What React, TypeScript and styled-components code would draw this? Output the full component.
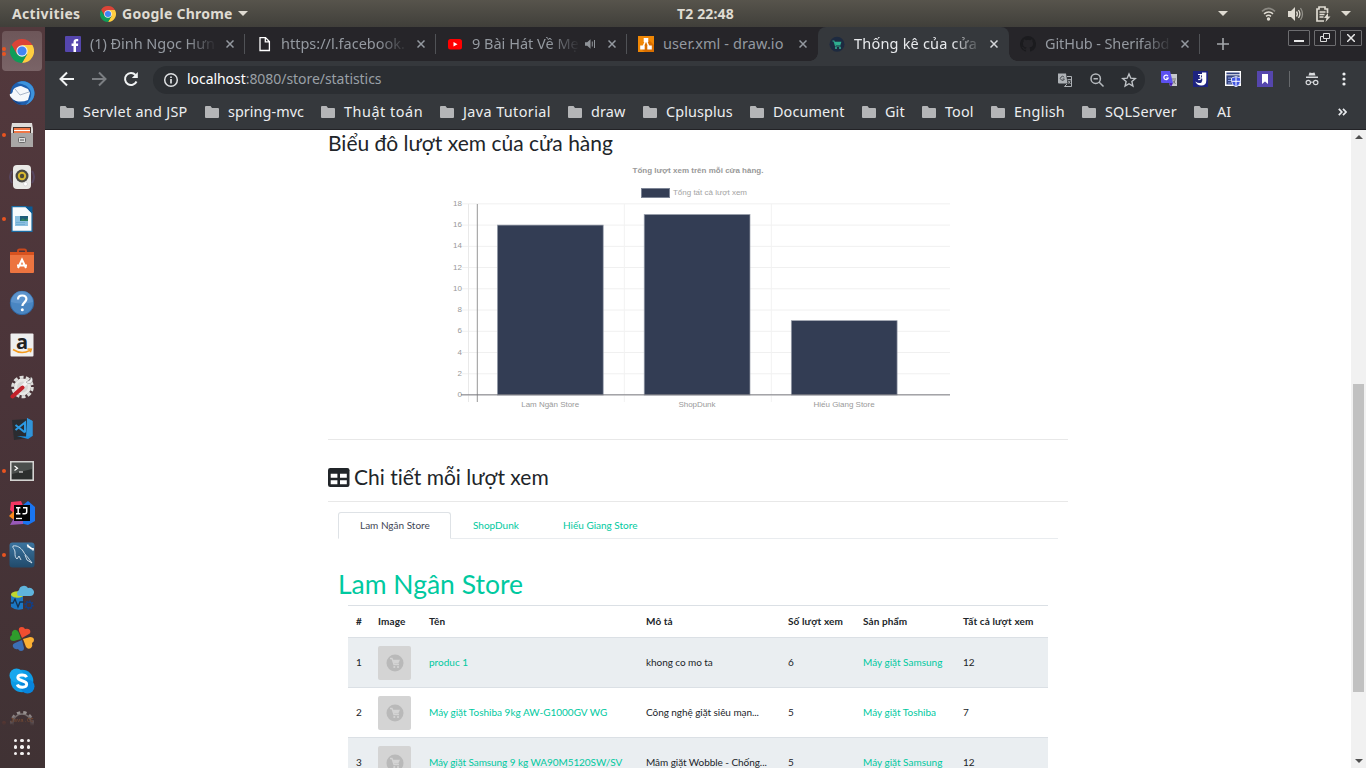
import React from "react";
import styled, { createGlobalStyle } from "styled-components";

const UI = `"Noto Sans", "Open Sans", "DejaVu Sans", sans-serif`;
const PAGE = `Lato, "Open Sans", "Noto Sans", sans-serif`;

const Global = createGlobalStyle`
  * { box-sizing: border-box; }
  body { margin: 0; overflow: hidden; font-family: ${UI}; background: #fff; }
  svg { display: block; flex: none; }
`;

const Desktop = styled.div`
  width: 1366px;
  height: 768px;
  display: flex;
  flex-direction: column;
  overflow: hidden;
`;

/* ---------- Top panel ---------- */

const TopBar = styled.header`
  height: 27px;
  flex: none;
  display: grid;
  grid-template-columns: 677px auto 1fr;
  align-items: center;
  background: linear-gradient(#57544c, #403f3a);
  color: #dfdbd2;
  font: bold 14px/26px ${UI};
`;
const TopLeft = styled.div`
  display: flex;
  align-items: center;
  padding-left: 12px;
`;
const TopText = styled.span<{ $spacing?: number; $w?: number; $ml?: number }>`
  letter-spacing: ${(p) => p.$spacing ?? 0}px;
  width: ${(p) => (p.$w ? `${p.$w}px` : "auto")};
  margin-left: ${(p) => p.$ml ?? 0}px;
  white-space: nowrap;
`;
const TopRight = styled.div`
  display: flex;
  align-items: center;
  justify-content: flex-end;
  padding-right: 15px;
`;
const Caret = styled.i<{ $ml?: number }>`
  width: 0;
  height: 0;
  margin-left: ${(p) => p.$ml ?? 0}px;
  border: 5px solid transparent;
  border-top-color: #dfdbd2;
  border-bottom: 0;
`;
const Tray = styled.div`
  display: flex;
  align-items: center;
  gap: 12px;
  margin-left: 33px;
`;

const Body = styled.div`
  flex: 1;
  display: flex;
  min-height: 0;
`;

/* ---------- Dock ---------- */

const Dock = styled.nav`
  width: 45px;
  flex: none;
  padding-top: 3px;
  background: linear-gradient(#53393d, #4a3439 50%, #403234);
  display: flex;
  flex-direction: column;
`;
const Slot = styled.div<{ $short?: boolean }>`
  height: ${(p) => (p.$short ? 24 : 42)}px;
  width: 45px;
  flex: none;
  overflow: hidden;
  display: grid;
  grid-template-columns: 2px 40px;
  align-items: ${(p) => (p.$short ? "start" : "center")};
  padding-top: ${(p) => (p.$short ? 8 : 0)}px;
  mask-image: ${(p) => (p.$short ? "linear-gradient(rgba(0,0,0,.7) 50%, transparent)" : "none")};
`;
const Tile = styled.div<{ $active?: boolean }>`
  grid-column: 2;
  grid-row: 1;
  width: 40px;
  height: ${(p) => (p.$active ? "40px" : "auto")};
  display: flex;
  align-items: center;
  justify-content: center;
  border-radius: 4px;
  background: ${(p) => (p.$active ? "linear-gradient(#6d5659, #7a6467)" : "none")};
`;
const Dots = styled.div<{ $dim?: boolean }>`
  grid-column: 1;
  grid-row: 1;
  display: flex;
  flex-direction: column;
  gap: 1px;
  z-index: 1;
  margin-top: ${(p) => (p.$dim ? 11 : 0)}px;
  opacity: ${(p) => (p.$dim ? 0.5 : 1)};
`;
const Dot = styled.i`
  width: 4px;
  height: 4px;
  margin-left: 2px;
  border-radius: 50%;
  background: #e95420;
`;
const AppsButton = styled.div`
  display: grid;
  grid-template-columns: repeat(3, 3.4px);
  grid-auto-rows: 3.4px;
  gap: 3.1px;
  margin: 13px 0 0 13.7px;
`;
const AppsDot = styled.i`
  border-radius: 50%;
  background: #f4f2f2;
`;

/* ---------- Browser ---------- */

const Browser = styled.main`
  flex: 1;
  min-width: 0;
  display: flex;
  flex-direction: column;
  background: #35383c;
`;
const TabStrip = styled.div`
  height: 34px;
  flex: none;
  display: flex;
  background: #262529;
  padding-left: 9px;
`;
const TabBox = styled.div<{ $active?: boolean; $line?: boolean }>`
  width: 191px;
  height: 34px;
  flex: none;
  display: flex;
  align-items: center;
  padding: 0 11px 0 11px;
  position: relative;
  border-radius: 8px 8px 0 0;
  background: ${(p) => (p.$active ? "#35383c" : "transparent")};
  color: ${(p) => (p.$active ? "#e8eaed" : "#9499a0")};
  font-size: 14.5px;
  &::after {
    content: "";
    position: absolute;
    right: 0;
    top: 7px;
    width: 1px;
    height: 20px;
    background: ${(p) => (p.$line ? "#505256" : "transparent")};
  }
`;
const TabTitle = styled.span<{ $w: number; $spacing: number; $fade: boolean }>`
  width: ${(p) => p.$w}px;
  margin-left: 9px;
  padding-bottom: 2px;
  overflow: hidden;
  white-space: nowrap;
  line-height: 24px;
  letter-spacing: ${(p) => p.$spacing}px;
  mask-image: ${(p) => (p.$fade ? "linear-gradient(90deg, #000 calc(100% - 30px), transparent)" : "none")};
`;
const TabEnd = styled.div`
  margin-left: auto;
  display: flex;
  align-items: center;
  gap: 12px;
`;
const Corner = styled.i<{ $side: "left" | "right" }>`
  position: absolute;
  bottom: 0;
  ${(p) => p.$side}: -8px;
  width: 8px;
  height: 8px;
  background: radial-gradient(
    circle at ${(p) => (p.$side === "left" ? "0 0" : "100% 0")},
    transparent 7.5px,
    #35383c 8px
  );
`;
const NewTab = styled.div`
  width: 46px;
  display: flex;
  align-items: center;
  justify-content: center;
`;
const WindowButtons = styled.div`
  margin-left: auto;
  display: flex;
  gap: 4px;
  padding: 3px 4px 0 0;
`;
const WinButton = styled.span`
  width: 22px;
  height: 16px;
  border: 1px solid #6d6d70;
  border-radius: 1px;
  display: flex;
  align-items: center;
  justify-content: center;
`;
const Toolbar = styled.div`
  height: 37px;
  flex: none;
  display: flex;
  align-items: center;
  padding: 0 14px 2px 14px;
`;
const NavIcons = styled.div`
  display: flex;
  align-items: center;
  gap: 16px;
  width: 94px;
`;
const Omnibox = styled.div`
  width: 992px;
  height: 28px;
  margin-top: 2px;
  border-radius: 14px;
  background: #2b2e32;
  display: flex;
  align-items: center;
  padding: 0 8px 0 10px;
`;
const Url = styled.span`
  margin-left: 8px;
  flex: 1;
  padding-bottom: 2px;
  color: #9aa0a6;
  font-size: 14px;
  letter-spacing: -0.05px;
  b { font-weight: 400; color: #fff; }
`;
const OmniIcons = styled.div`
  display: flex;
  align-items: center;
  gap: 16px;
`;
const Extensions = styled.div`
  display: flex;
  align-items: center;
  gap: 16px;
  margin-left: 16px;
`;
const ToolDivider = styled.i`
  width: 1px;
  height: 16px;
  margin-left: 16px;
  background: #66696c;
`;
const ToolEnd = styled.div`
  display: flex;
  align-items: center;
  gap: 16px;
  margin-left: 14px;
`;
const Bookmarks = styled.div`
  height: 32px;
  flex: none;
  display: flex;
  align-items: center;
  border-bottom: 1px solid #222226;
  padding: 0 19px 3px 15px;
  color: #eceef0;
  font-size: 14.4px;
  line-height: 20px;
`;
const Bookmark = styled.div<{ $w: number; $spacing: number }>`
  width: ${(p) => p.$w}px;
  flex: none;
  display: flex;
  align-items: center;
  gap: 9px;
  white-space: nowrap;
  letter-spacing: ${(p) => p.$spacing}px;
`;
const BookmarkName = styled.span`
  margin-top: -1px;
`;
const More = styled.span`
  margin-left: auto;
  display: flex;
`;

/* ---------- Page ---------- */

const Viewport = styled.div`
  flex: 1;
  min-height: 0;
  display: flex;
  background: #fff;
`;
const Page = styled.div`
  flex: 1;
  display: flex;
  justify-content: flex-start;
  padding-left: 283px;
  overflow: hidden;
  font-family: ${PAGE};
  font-variant-ligatures: none;
  color: #212529;
`;
const Container = styled.div`
  width: 740px;
  flex: none;
`;
const ChartHeading = styled.h2`
  margin: 0;
  height: 30px;
  font: 400 21px/25px ${PAGE};
  font-variant-ligatures: none;
  white-space: nowrap;
`;
const ChartBox = styled.div`
  height: 279px;
`;
const Rule = styled.hr`
  margin: 0;
  border: 0;
  height: 1px;
  background: #e8e8e8;
`;
const DetailHeading = styled.h2`
  margin: 0;
  height: 61px;
  padding-top: 23px;
  display: flex;
  gap: 4px;
  font: 400 21px/28px ${PAGE};
  font-variant-ligatures: none;
  white-space: nowrap;
  svg { margin-top: 5px; }
`;
const StoreTabs = styled.div`
  margin: 10px 10px 0;
  height: 27px;
  display: flex;
  border-bottom: 1px solid #e9ecef;
  font-size: 10px;
  line-height: 25px;
`;
const StoreTab = styled.span<{ $active?: boolean; $w: number }>`
  height: 27px;
  width: ${(p) => p.$w}px;
  padding-left: 21px;
  white-space: nowrap;
  border: 1px solid transparent;
  border-radius: 3px 3px 0 0;
  color: #00c9a0;
  ${(p) =>
    p.$active &&
    `border-color: #dee2e6; border-bottom-color: #fff; background: #fff; color: #3e4655;`}
`;
const StoreTitle = styled.h1`
  margin: 25px 0 0 10px;
  height: 41px;
  font: 400 26.5px/41px ${PAGE};
  color: #00c9a0;
`;
const Table = styled.div`
  width: 700px;
  margin-left: 20px;
  font-size: 10px;
`;
const Row = styled.div<{ $head?: boolean; $striped?: boolean }>`
  display: grid;
  grid-template-columns: 22px 51px 217px 142px 75px 100px 93px;
  align-items: center;
  height: ${(p) => (p.$head ? 32 : 50)}px;
  border-top: 1px solid #dbe0e5;
  background: ${(p) => (p.$striped ? "#eaeef1" : "#fff")};
  font-weight: ${(p) => (p.$head ? 700 : 400)};
  letter-spacing: ${(p) => (p.$head ? 0.1 : 0)}px;
`;
const Cell = styled.span<{ $link?: boolean; $spacing?: number }>`
  padding: 0 0 2px 8px;
  white-space: nowrap;
  letter-spacing: ${(p) => (p.$spacing === undefined ? "inherit" : `${p.$spacing}px`)};
  color: ${(p) => (p.$link ? "#00c9a0" : "inherit")};
`;
const ThumbCell = styled.span`
  padding-left: 8px;
`;
const Thumb = styled.span`
  width: 33px;
  height: 34px;
  border-radius: 2px;
  background: #d4d4d4;
  display: flex;
  align-items: center;
  justify-content: center;
`;
const Scrollbar = styled.div`
  width: 15px;
  flex: none;
  display: flex;
  flex-direction: column;
  align-items: center;
  background: #f1f1f1;
  padding: 5px 0;
`;
const Arrow = styled.i<{ $down?: boolean }>`
  width: 0;
  height: 0;
  border: 4px solid transparent;
  ${(p) =>
    p.$down
      ? "border-top-color: #505050; border-bottom: 0; margin-top: auto;"
      : "border-bottom-color: #505050; border-top: 0;"}
`;
const ScrollThumb = styled.div`
  width: 11px;
  height: 308px;
  margin-top: 245px;
  background: #c1c1c1;
`;

/* ---------- Icons ---------- */

const Chrome = ({ size }: { size: number }) => (
  <svg width={size} height={size} viewBox="0 0 24 24">
    <path d="M12 6H22.4A12 12 0 0 1 12 24l5.2-9z" fill="#ffcd40" />
    <path d="M1.6 6A12 12 0 0 1 22.4 6H12L6.8 15z" fill="#db4437" />
    <path d="M1.6 6A12 12 0 0 0 12 24l5.2-9H6.8z" fill="#0f9d58" />
    <circle cx="12" cy="12" r="5.7" fill="#f1f1f1" />
    <circle cx="12" cy="12" r="4.6" fill="#4285f4" />
  </svg>
);

const Thunderbird = () => (
  <svg width="26" height="26" viewBox="0 0 26 26">
    <circle cx="13.500" cy="13" r="12" fill="#1f5fae" />
    <path d="M8 3C16-2 25 4 25.500 13c0 6-4 10-9 12 6-6 7-12 4-16-3-4-7-5-12.500-6z" fill="#3d93dc" />
    <path d="M1 12c2 6 5 10 12 12-5 1-11-4-12-12z" fill="#123f82" />
    <path d="M4 10c2-3 6-4 8-4l7 3 2 4-2 7c-5 2-10 2-14 0-3-2-5-5-4-6 2 0 3-2 3-4z" fill="#f6f8fb" />
    <path d="m6 9 5 6 9-3" fill="none" stroke="#a9b6c9" />
  </svg>
);
const Files = () => (
  <svg width="24" height="26" viewBox="0 0 24 26">
    <path d="M2 1h20l1 6v17a1 1 0 0 1-1 1H2a1 1 0 0 1-1-1V7z" fill="#dedcda" />
    <path d="M3 5h18v6H3z" fill="#46342e" />
    <path d="M4 6h16v5H4z" fill="#f07746" />
    <path d="M4 8h16v1H4z" fill="#fff" />
    <path d="M1 11h22v13a1 1 0 0 1-1 1H2a1 1 0 0 1-1-1z" fill="#a9a7a6" />
    <rect x="8.500" y="15.500" width="7" height="5" rx="1" fill="#ddd" stroke="#6b6b6b" />
    <path d="M10 18h4" stroke="#555" />
  </svg>
);
const Rhythmbox = () => (
  <svg width="26" height="26" viewBox="0 0 26 26">
    <path d="M3 7Q-1 13 3 19M23 7q4 6 0 12" fill="none" stroke="#57465f" strokeWidth="2" />
    <rect x="4" y="1" width="18" height="24" rx="4" fill="#e9e9e6" />
    <circle cx="13" cy="12" r="6.500" fill="#4b4a45" />
    <circle cx="13" cy="12" r="4.200" fill="#d8b92f" />
    <circle cx="13" cy="12" r="2.200" fill="#4f4a36" />
    <circle cx="16.500" cy="20" r="2" fill="#fff" stroke="#ccc" strokeWidth=".6" />
  </svg>
);
const Writer = () => (
  <svg width="22" height="26" viewBox="0 0 22 26">
    <path d="M1 .7h14l6 6v18.600H1z" fill="#f8fbfd" stroke="#1b6ca3" strokeWidth="1.200" />
    <path d="M14 .500h7.500V8z" fill="#0b5c96" />
    <rect x="4" y="10" width="13" height="10" fill="#8cc0e0" />
    <rect x="9" y="10" width="8" height="5" fill="#1d5d7a" />
    <path d="M9 15l3-3 2 2 3-2v3z" fill="#2c8060" />
    <path d="M5 16.500h9M5 18.500h9" stroke="#6fadd4" />
  </svg>
);
const Software = () => (
  <svg width="24" height="26" viewBox="0 0 24 26">
    <path d="M8 5V3Q8 1.500 9.500 1.500h5Q16 1.500 16 3v2" fill="none" stroke="#c9481d" strokeWidth="2" />
    <path d="M0 4h24v20a1 1 0 0 1-1 1H1a1 1 0 0 1-1-1z" fill="#ec7440" />
    <path d="M0 4h24v3H0z" fill="#d7521f" />
    <path d="M8 20 12 11.500 16 20M7 17.500h10" fill="none" stroke="#fff" strokeWidth="2" />
  </svg>
);
const Help = () => (
  <svg width="26" height="26" viewBox="0 0 26 26">
    <circle cx="13" cy="13" r="11.700" fill="#4a86c2" stroke="#2f68a5" />
    <path d="M2 12a11 11 0 0 1 22 0q-11 3-22 0z" fill="#6a9fd4" opacity=".6" />
    <path d="M9 9.500q0-4 4.200-4t4.200 3.600c0 3-4 3.600-4 7" fill="none" stroke="#fff" strokeWidth="2.200" />
    <circle cx="13.300" cy="19.800" r="1.500" fill="#fff" />
  </svg>
);
const Amazon = () => (
  <svg width="24" height="24" viewBox="0 0 24 24">
    <rect x=".5" y=".5" width="23" height="23" rx="1" fill="#efefef" />
    <text x="12" y="15.500" textAnchor="middle" fontFamily="Open Sans" fontWeight="700" fontSize="20" fill="#222">a</text>
    <path d="M3 16.500q8.500 5.500 17 .8M17.500 16l3.800.2-1 3" fill="none" stroke="#f39a1d" strokeWidth="1.500" />
  </svg>
);
const Settings = () => (
  <svg width="24" height="24" viewBox="0 0 24 24">
    <circle cx="12.500" cy="12" r="9.800" fill="none" stroke="#dcdcda" strokeWidth="3" strokeDasharray="3.900 2.250" />
    <circle cx="12.500" cy="12" r="7" fill="#d6d6d4" stroke="#e8e8e6" strokeWidth="3" />
    <path d="m12 12 6-6" stroke="#f3f3f3" strokeWidth="3.500" />
    <path d="M16 7a3.600 3.600 0 1 0 5-5l-1 3-2 1z" fill="#eee" stroke="#888" strokeWidth=".5" />
    <path d="m2.500 21.500 10-9" stroke="#c3212a" strokeWidth="4" strokeLinecap="round" />
  </svg>
);
const VsCode = () => (
  <svg width="24" height="24" viewBox="0 0 24 24">
    <path d="m2 3 16-1v19L4 23z" fill="#2a2c30" />
    <path d="m17 1 5.500 3v15L18 22l-11-3 9 .500z" fill="#1f8fdd" />
    <path d="M17 1v18l5.500 0V4z" fill="#3294d8" />
    <path d="M5.500 8 15 15.500M5.500 13 15 5.500v10" fill="none" stroke="#2c9ae3" strokeWidth="2" />
  </svg>
);
const Terminal = () => (
  <svg width="24" height="20" viewBox="0 0 24 20">
    <rect x=".8" y=".8" width="22.400" height="18.400" fill="#2c2f2e" stroke="#d3d3d1" strokeWidth="1.600" />
    <path d="M2 2h20v6L2 13z" fill="#4b4f4d" />
    <path d="m4.500 5 3 2.200-3 2.200M9 11h4" fill="none" stroke="#fff" strokeWidth="1.200" />
  </svg>
);
const IntelliJ = () => (
  <svg width="26" height="26" viewBox="0 0 26 26">
    <path d="M2 2l10-1 4 9-8 6-7-6z" fill="#f43662" />
    <path d="m0 16 5-5 4 8-4 1z" fill="#fb8a1e" />
    <path d="m14 5 5-4 7 6v14l-7 4-8-2z" fill="#1a75f0" />
    <path d="m1 25 4-7h9v6z" fill="#9859b8" />
    <rect x="5" y="5" width="16" height="16" fill="#050505" />
    <path d="M7 7.700h4.400M9.200 7.700v6M7 13.700h4.400M14 7.700h3.700v4q0 2-2 2H13.500" fill="none" stroke="#fff" strokeWidth="1.500" />
    <path d="M7 18.500h6" stroke="#fff" strokeWidth="1.300" />
  </svg>
);
const MySql = () => (
  <svg width="26" height="26" viewBox="0 0 26 26">
    <defs>
      <linearGradient id="mysql" x1="0" y1="0" x2="0" y2="1">
        <stop offset="0" stopColor="#3b749f" />
        <stop offset="1" stopColor="#214a6b" />
      </linearGradient>
    </defs>
    <rect x=".5" y=".5" width="25" height="25" rx="3" fill="url(#mysql)" />
    <path d="M4 4c4-1 8 2 10 5 2 4 4 5 6 8l3 4-5-3M4 4c-1 2 2 3 2 6 0 4 0 5 2 7l2-3 2 4M16 13l2 5" fill="none" stroke="#dbe7ef" strokeWidth=".9" />
    <path d="m19 4 4 3M18.500 2.500l1 3M24 6v2.500" stroke="#fff" strokeWidth="1.600" />
  </svg>
);
const SqlStudio = () => (
  <svg width="24" height="25" viewBox="0 0 24 25">
    <path d="M1 9v13q5 4 12 2V9z" fill="#1c78c4" />
    <ellipse cx="7.500" cy="9.500" rx="6.500" ry="3.300" fill="#bfd630" />
    <path d="M8 11a4 4 0 0 1 1-6 5 5 0 0 1 9-2 4.500 4.500 0 0 1 5 7q-1 1-3 1z" fill="#5fb4dc" />
    <path d="M0 18h3l2-4 3 8 2-5h4" fill="none" stroke="#16324f" strokeWidth="1.300" />
    <circle cx="19" cy="20" r="3.500" fill="none" stroke="#123f86" strokeWidth="2.400" strokeDasharray="1.400 1.300" />
    <circle cx="19" cy="20" r="2.900" fill="none" stroke="#123f86" strokeWidth="1.200" />
  </svg>
);
const Clover = () => (
  <svg width="26" height="26" viewBox="0 0 26 26">
    <path d="M13 12 10 5q-1-4 3-4 2 0 3 2 3-1 5 1 1 3-1 4z" fill="#f04e30" />
    <path d="m14 13 7-2q4 0 4 3 0 2-2 3 1 3-1 5-3 2-5-1z" fill="#fbb034" />
    <path d="m13 14 2 8q0 3-3 3-2 0-3-2-3 1-5-2-1-3 2-4z" fill="#3c6fb6" />
    <path d="m12 13-7 2q-4 0-4-3 0-2 2-3-1-3 2-5 3-1 5 3z" fill="#2f9c2c" />
  </svg>
);
const Skype = () => (
  <svg width="26" height="26" viewBox="0 0 26 26">
    <circle cx="13" cy="13" r="11.300" fill="#0c9be6" />
    <circle cx="7.500" cy="7.500" r="7" fill="#16a7ee" />
    <circle cx="18.500" cy="18.500" r="7" fill="#0885dc" />
    <path d="M17.500 9.200C16.500 6.300 9 6 8.800 9.600c0 4 8.900 2.300 8.900 6.600-.2 4-8.200 4-9.400.3" fill="none" stroke="#fff" strokeWidth="2.900" />
  </svg>
);
const JavaCc = () => (
  <svg width="26" height="26" viewBox="0 0 26 26">
    <circle cx="13" cy="13" r="10.500" fill="none" stroke="#bdb9b7" strokeWidth="3" strokeDasharray="3.300 3" />
    <circle cx="13" cy="13" r="9" fill="none" stroke="#9b9694" strokeWidth="1.500" />
    <text x="13" y="12" textAnchor="middle" fontFamily="Liberation Mono" fontWeight="700" fontSize="5.500" fill="#c9702d">Java.CC</text>
  </svg>
);

const Close = ({ color }: { color: string }) => (
  <svg width="8" height="8" viewBox="0 0 8 8" stroke={color} strokeWidth="1.500">
    <path d="m.5.5 7 7M7.500.5l-7 7" />
  </svg>
);
const Folder = () => (
  <svg width="14" height="12" viewBox="0 0 14 12">
    <path d="M1 0h4.500L7 2h6a1 1 0 0 1 1 1v8a1 1 0 0 1-1 1H1a1 1 0 0 1-1-1V1a1 1 0 0 1 1-1z" fill="#b4b5b7" />
  </svg>
);
const FacebookIcon = () => (
  <svg width="16" height="16" viewBox="0 0 16 16">
    <rect width="16" height="16" rx="1" fill="#5546ad" />
    <path d="M8.500 16v-6H6.600V7.500h1.900V6c0-2 1.200-3 3-3h1.700v2.300h-1.200c-.8 0-1 .4-1 1v1.200h2.200L13 10h-2v6z" fill="#fff" />
  </svg>
);
const PageIcon = () => (
  <svg width="16" height="16" viewBox="0 0 16 16" fill="none" stroke="#fff" strokeWidth="1.300">
    <path d="M4 1.600h5.500l3.900 3.900v9H4zM9.300 1.600v4.200h4.100" />
  </svg>
);
const YoutubeIcon = () => (
  <svg width="16" height="16" viewBox="0 0 16 16">
    <rect x="1" y="3" width="14" height="10.500" rx="2.500" fill="#f00" />
    <path d="m6.500 6 4 2.200-4 2.200z" fill="#fff" />
  </svg>
);
const DrawIcon = () => (
  <svg width="16" height="16" viewBox="0 0 16 16">
    <rect width="16" height="16" fill="#f08705" />
    <path d="M10 3l6 6v7H7L4 14z" fill="#d96f00" />
    <path d="M8 4 4.500 12M8 4l3.500 8" stroke="#fff" strokeWidth="1.500" />
    <path d="M5.700 2h4.600v4H5.700zM2.200 9.500h4.500v4H2.200zM9.300 9.500h4.500v4H9.300z" fill="#fff" />
  </svg>
);
const ShopIcon = () => (
  <svg width="16" height="16" viewBox="0 0 16 16">
    <circle cx="8" cy="8.300" r="7.500" fill="#1d2a40" />
    <path d="M3.500 5H5l1.500 5h5" fill="none" stroke="#2ea98c" strokeWidth="1.100" />
    <path d="M5.400 5.700h7l-1 3.300h-5z" fill="#2fae90" />
    <circle cx="7" cy="12" r=".9" fill="#36c5a0" />
    <circle cx="11" cy="12" r=".9" fill="#36c5a0" />
  </svg>
);
const GithubIcon = () => (
  <svg width="16" height="16" viewBox="0 0 16 16">
    <path fill="#1b1b1e" d="M8 0a8 8 0 0 0-2.530 15.590c.4.070.55-.17.55-.38v-1.490c-2.010.37-2.530-.490-2.690-.940-.09-.23-.48-.94-.82-1.130-.28-.15-.68-.52-.01-.53.63-.01 1.080.58 1.230.82.72 1.210 1.870.87 2.330.66.070-.52.280-.87.510-1.070-1.780-.2-3.640-.89-3.640-3.950 0-.87.31-1.590.82-2.150-.08-.2-.36-1.020.08-2.120 0 0 .67-.21 2.200.82a7.500 7.500 0 0 1 4 0c1.530-1.040 2.200-.82 2.200-.82.44 1.100.16 1.920.08 2.120.51.56.82 1.270.82 2.150 0 3.070-1.870 3.750-3.650 3.950.29.25.54.73.54 1.480v2.200c0 .21.15.46.55.38A8 8 0 0 0 8 0z" />
  </svg>
);
const TabSpeaker = () => (
  <svg width="11" height="10" viewBox="0 0 11 10">
    <path d="M0 3.200h2.200L5.500.3v9.400L2.200 6.800H0z" fill="#8f9398" />
    <path d="M7.300 2.500v5M9.500 1v8" stroke="#8f9398" />
  </svg>
);
const Wifi = () => (
  <svg width="15" height="14" viewBox="0 0 15 14" fill="none" strokeWidth="1.600">
    <path d="M1 4.300Q7.500-1.500 14 4.300" stroke="#8b8982" />
    <path d="M3 6.800q4.500-3.600 9 0M5 9.300q2.500-2 5 0" stroke="#dfdbd2" />
    <circle cx="7.500" cy="12" r="1.700" fill="#dfdbd2" />
  </svg>
);
const Volume = () => (
  <svg width="16" height="14" viewBox="0 0 16 14" fill="none">
    <path d="M0 4h3l4-4v14l-4-4H0z" fill="#dfdbd2" />
    <path d="M8.500 4.500q1.800 2.500 0 5M10.500 3q2.800 4 0 8" stroke="#dfdbd2" strokeWidth="1.300" />
    <path d="M12.500 1q4 6 0 12" stroke="#918f88" strokeWidth="1.300" />
  </svg>
);
const Battery = () => (
  <svg width="15" height="16" viewBox="0 0 15 16" fill="none" stroke="#dfdbd2">
    <path d="M8 15H1V3h2V1h6v2h2.500v4" strokeWidth="1.700" />
    <path d="M3.500 6h6M3.500 8.500h5M3.500 11h4" strokeWidth="1.400" />
    <path d="m12 7-4 5h2.500L9.500 16l5-5.500H12z" fill="#dfdbd2" stroke="none" />
  </svg>
);

const Chart = () => {
  const ticks = [18, 16, 14, 12, 10, 8, 6, 4, 2, 0];
  const y = (v: number) => 235 - v * 10.62;
  const bars = [
    { name: "Lam Ngân Store", value: 16, x: 169.4, w: 58 },
    { name: "ShopDunk", value: 17, x: 316.2, w: 37 },
    { name: "Hiếu Giang Store", value: 7, x: 463.3, w: 61 },
  ];
  return (
    <svg width="740" height="279" viewBox="0 0 740 279" fontFamily="Liberation Sans, sans-serif" fontSize="8">
      <text x="370" y="13.200" fontWeight="700" fill="#999" textAnchor="middle" textLength="131">Tổng lượt xem trên mỗi cửa hàng.</text>
      <rect x="313.500" y="28.500" width="28" height="9" fill="#333d54" stroke="#7c8495" />
      <text x="345" y="34.800" fill="#a3a3a3" textLength="74">Tổng tất cả lượt xem</text>
      {ticks.map((t) => (
        <g key={t}>
          <path d={`M134 ${y(t)}H622`} stroke="#f0f0f0" />
          <text x="134" y={y(t) + 2.1} fill="#999" textAnchor="end" fontSize="8">{t}</text>
        </g>
      ))}
      <path d="M140.500 44V242" stroke="#e9e9e9" />
      <path d="M296.300 44V242M443.300 44V242" stroke="#f2f2f2" />
      <path d="M149.300 44V242" stroke="#969696" />
      {bars.map((b) => (
        <g key={b.name}>
          <rect x={b.x} y={y(b.value)} width="105.800" height={235 - y(b.value)} fill="#333d54" stroke="#9aa0ad" strokeWidth=".7" />
          <text x={b.x + 52.8} y="247.300" fill="#999" textAnchor="middle" textLength={b.w}>{b.name}</text>
        </g>
      ))}
      <path d="M133 234.800H622" stroke="#77777c" strokeOpacity=".65" strokeWidth="1.600" />
    </svg>
  );
};

/* ---------- Data ---------- */

const dockApps: { icon: React.ReactNode; dots?: number; active?: boolean; short?: boolean }[] = [
  { icon: <Chrome size={24} />, dots: 2, active: true },
  { icon: <Thunderbird /> },
  { icon: <Files />, dots: 1 },
  { icon: <Rhythmbox /> },
  { icon: <Writer />, dots: 1 },
  { icon: <Software /> },
  { icon: <Help /> },
  { icon: <Amazon /> },
  { icon: <Settings /> },
  { icon: <VsCode /> },
  { icon: <Terminal />, dots: 1 },
  { icon: <IntelliJ /> },
  { icon: <MySql />, dots: 1 },
  { icon: <SqlStudio /> },
  { icon: <Clover /> },
  { icon: <Skype /> },
  { icon: <JavaCc />, dots: 1, short: true },
];

const tabs = [
  { title: "(1) Đinh Ngọc Hưn", icon: <FacebookIcon />, w: 127, s: -0.05, line: true, fade: true },
  { title: "https://l.facebook.", icon: <PageIcon />, w: 127, s: 0, line: true, fade: true },
  { title: "9 Bài Hát Về Mẹ", icon: <YoutubeIcon />, w: 108, s: 0, line: true, fade: true, sound: true },
  { title: "user.xml - draw.io", icon: <DrawIcon />, w: 127, s: 0.1, fade: false },
  { title: "Thống kê của cửa", icon: <ShopIcon />, w: 128, s: 0.2, active: true, fade: true },
  { title: "GitHub - Sherifabd", icon: <GithubIcon />, w: 128, s: -0.1, line: true, fade: true },
];

const bookmarks: [string, number, number][] = [
  ["Servlet and JSP", 145, 0.3],
  ["spring-mvc", 116, 0.05],
  ["Thuật toán", 119, 0.55],
  ["Java Tutorial", 128, 0.4],
  ["draw", 75, 0.1],
  ["Cplusplus", 107, 0.1],
  ["Document", 112, 0.1],
  ["Git", 60, 0.1],
  ["Tool", 69, 0.1],
  ["English", 91, 0.3],
  ["SQLServer", 112, 0.2],
  ["AI", 40, 0],
];

const rows = [
  ["1", "produc 1", "khong co mo ta", "6", "Máy giặt Samsung", "12"],
  ["2", "Máy giặt Toshiba 9kg AW-G1000GV WG", "Công nghệ giặt siêu mạn...", "5", "Máy giặt Toshiba", "7"],
  ["3", "Máy giặt Samsung 9 kg WA90M5120SW/SV", "Mâm giặt Wobble - Chống...", "5", "Máy giặt Samsung", "12"],
];

export default function App() {
  return (
    <Desktop>
      <Global />
      <TopBar>
        <TopLeft>
          <TopText $w={88} $spacing={0.35}>Activities</TopText>
          <Chrome size={16} />
          <TopText $ml={6} $w={111} $spacing={0.25}>Google Chrome</TopText>
          <Caret $ml={5} />
        </TopLeft>
        <TopText $spacing={0.15}>T2 22:48</TopText>
        <TopRight>
          <Caret />
          <Tray>
            <Wifi />
            <Volume />
            <Battery />
          </Tray>
          <Caret $ml={10} />
        </TopRight>
      </TopBar>
      <Body>
        <Dock>
          {dockApps.map((a, i) => (
            <Slot key={i} $short={a.short}>
              {a.dots && (
                <Dots $dim={a.short}>
                  {Array.from({ length: a.dots }, (_, d) => (
                    <Dot key={d} />
                  ))}
                </Dots>
              )}
              <Tile $active={a.active}>{a.icon}</Tile>
            </Slot>
          ))}
          <AppsButton>
            {Array.from({ length: 9 }, (_, i) => (
              <AppsDot key={i} />
            ))}
          </AppsButton>
        </Dock>
        <Browser>
          <TabStrip>
            {tabs.map((t) => (
              <TabBox key={t.title} $active={t.active} $line={t.line}>
                {t.active && <Corner $side="left" />}
                {t.icon}
                <TabTitle $w={t.w} $spacing={t.s} $fade={t.fade}>{t.title}</TabTitle>
                <TabEnd>
                  {t.sound && <TabSpeaker />}
                  <Close color={t.active ? "#d5d7da" : "#9499a0"} />
                </TabEnd>
                {t.active && <Corner $side="right" />}
              </TabBox>
            ))}
            <NewTab>
              <svg width="12" height="12" viewBox="0 0 12 12" stroke="#a5a8ac" strokeWidth="1.600"><path d="M6 0v12M0 6h12" /></svg>
            </NewTab>
            <WindowButtons>
              <WinButton><svg width="10" height="10" viewBox="0 0 10 10"><path d="M0 8h10" stroke="#e8e8e8" strokeWidth="2" /></svg></WinButton>
              <WinButton><svg width="10" height="10" viewBox="0 0 10 10" fill="none" stroke="#dcdcdc"><path d="M3.500.5h6v5h-6zM3 3.500H.5v5h6V6" /></svg></WinButton>
              <WinButton><svg width="8" height="8" viewBox="0 0 8 8" stroke="#e8e8e8" strokeWidth="1.500"><path d="m0 0 8 8M8 0 0 8" /></svg></WinButton>
            </WindowButtons>
          </TabStrip>
          <Toolbar>
            <NavIcons>
              <svg width="16" height="16" viewBox="0 0 16 16" fill="none" stroke="#f1f3f4" strokeWidth="2"><path d="M15 8H2M8 1.500 1.500 8 8 14.500" /></svg>
              <svg width="16" height="16" viewBox="0 0 16 16" fill="none" stroke="#7b7e82" strokeWidth="2"><path d="M1 8h13M8 1.500 14.500 8 8 14.500" /></svg>
              <svg width="16" height="16" viewBox="0 0 16 16" fill="none" stroke="#f1f3f4" strokeWidth="2"><path d="M13.500 10.500A6 6 0 1 1 12.500 4" /><path d="M14.800 1v6h-6z" fill="#f1f3f4" stroke="none" /></svg>
            </NavIcons>
            <Omnibox>
              <svg width="16" height="16" viewBox="0 0 16 16" fill="none" stroke="#dfe1e3" strokeWidth="1.500"><circle cx="8" cy="8" r="6.300" /><path d="M8 7v4.500M8 4.500v1.600" strokeWidth="1.700" /></svg>
              <Url><b>localhost</b>:8080/store/statistics</Url>
              <OmniIcons>
                <svg width="16" height="16" viewBox="0 0 16 16"><path d="M1 1.500h8l1.500 10H2a1 1 0 0 1-1-1z" fill="#aeb2b6" /><path d="M10 4.500h4.500v10H7.500L10 12" fill="none" stroke="#aeb2b6" /><path d="M7.200 5.300a2 2 0 1 0 .2 1.700H5.600" fill="none" stroke="#3c4044" strokeWidth=".9" /><path d="M10.500 7.500h3.500M11 8.500l2.500 3.500M13.300 8.500q-.5 2-2.300 3" fill="none" stroke="#aeb2b6" strokeWidth=".9" /></svg>
                <svg width="16" height="16" viewBox="0 0 16 16" fill="none" stroke="#b5b9bd" strokeWidth="1.500"><circle cx="6.700" cy="6.700" r="4.700" /><path d="m10 10 4.500 4.500M4.500 6.700h4.400" /></svg>
                <svg width="16" height="16" viewBox="0 0 16 16" fill="none" stroke="#c0c4c8" strokeWidth="1.400"><path d="m8 2 1.800 4.200 4.500.4-3.400 3 1 4.400L8 11.700 4.100 14l1-4.400-3.400-3 4.500-.4z" /></svg>
              </OmniIcons>
            </Omnibox>
            <Extensions>
              <svg width="16" height="16" viewBox="0 0 16 16"><path d="M6 3h10v12H9z" fill="#c6c8cc" /><path d="M0 0h9l3 12H1a1 1 0 0 1-1-1z" fill="#5b50f0" /><path d="m8 12h4l-2 4z" fill="#4a1fb8" /><path d="M7 5.200a2.200 2.200 0 1 0 .2 1.800H5.200" fill="none" stroke="#fff" strokeWidth="1.200" /><path d="M11 8h4M12 9.500l2.500 3.500M14 9q-.5 2.500-2 3.500" fill="none" stroke="#777" /></svg>
              <svg width="16" height="16" viewBox="0 0 16 16"><rect width="15" height="16" fill="#1d2380" /><path d="M9 1.500h4.300v8q0 5-5 5-4.300 0-6-4Q6 13 8.500 11.500 10 9 9 7z" fill="#fff" /><path d="M5 3.500h3.300L7 5.800q1.500.4 1 1.700T5.200 8.500" stroke="#fff" strokeWidth="1.200" fill="none" /></svg>
              <svg width="16" height="16" viewBox="0 0 16 16"><path d="M.7.700h14.600v13.600H.7z" fill="#33437f" stroke="#fff" strokeWidth="1.400" /><path d="M1 3.800h14" stroke="#fff" /><path d="M3 7h3M3 9.500h3M3 12h3" stroke="#8fa2e8" /><path d="M11 5.500 15.500 7v3q0 4-4.500 6-4.500-2-4.500-6V7z" fill="#4054e0" stroke="#fff" strokeWidth=".8" /><path d="M11 6v9.500M7 10.300h8" stroke="#fff" /></svg>
              <svg width="16" height="16" viewBox="0 0 16 16"><rect width="16" height="16" fill="#5546ad" /><path d="M5 3h6v10l-3-2.500L5 13z" fill="#fff" /></svg>
            </Extensions>
            <ToolDivider />
            <ToolEnd>
              <svg width="16" height="16" viewBox="0 0 16 16"><path d="M4.500 4.500 5.500 1.500l2.500.6 2.500-.6 1 3zM2 5.600h12v1.500H2z" fill="#d9dbde" /><path d="M6.300 11.500q1.700-1 3.400 0" stroke="#d9dbde" fill="none" /><circle cx="4.300" cy="11.500" r="2.200" fill="none" stroke="#d9dbde" strokeWidth="1.200" /><circle cx="11.700" cy="11.500" r="2.200" fill="none" stroke="#d9dbde" strokeWidth="1.200" /></svg>
              <svg width="16" height="16" viewBox="0 0 16 16" fill="#eceef0"><circle cx="8" cy="3" r="1.600" /><circle cx="8" cy="8" r="1.600" /><circle cx="8" cy="13" r="1.600" /></svg>
            </ToolEnd>
          </Toolbar>
          <Bookmarks>
            {bookmarks.map(([name, w, s]) => (
              <Bookmark key={name} $w={w} $spacing={s}>
                <Folder />
                <BookmarkName>{name}</BookmarkName>
              </Bookmark>
            ))}
            <More>
              <svg width="9" height="8" viewBox="0 0 9 8" fill="none" stroke="#e8eaed" strokeWidth="1.700"><path d="m.8.8 3 3.200-3 3.200M5 .8 8 4 5 7.200" /></svg>
            </More>
          </Bookmarks>
          <Viewport>
            <Page>
              <Container>
                <ChartHeading>Biểu đô lượt xem của cửa hàng</ChartHeading>
                <ChartBox><Chart /></ChartBox>
                <Rule />
                <DetailHeading>
                  <svg width="22" height="19" viewBox="0 0 22 19"><rect width="21.500" height="19" rx="2.200" fill="#212529" /><path d="M2.700 5.800h6.700v4H2.700zM12 5.800h6.800v4H12zM2.700 12.200h6.700v4H2.700zM12 12.200h6.800v4H12z" fill="#fff" /></svg>
                  Chi tiết mỗi lượt xem
                </DetailHeading>
                <Rule />
                <StoreTabs>
                  <StoreTab $active $w={113}>Lam Ngân Store</StoreTab>
                  <StoreTab $w={90}>ShopDunk</StoreTab>
                  <StoreTab $w={118}>Hiếu Giang Store</StoreTab>
                </StoreTabs>
                <StoreTitle>Lam Ngân Store</StoreTitle>
                <Table>
                  <Row $head>
                    {["#", "Image", "Tên", "Mô tả", "Số lượt xem", "Sản phẩm", "Tất cả lượt xem"].map((h) => (
                      <Cell key={h}>{h}</Cell>
                    ))}
                  </Row>
                  {rows.map((r, i) => (
                    <Row key={r[0]} $striped={i % 2 === 0}>
                      <Cell>{r[0]}</Cell>
                      <ThumbCell>
                        <Thumb>
                          <svg width="18" height="18" viewBox="0 0 18 18"><circle cx="9" cy="9" r="8.500" fill="#b9b9b9" /><path d="M4 4.500h2l2 6h5" fill="none" stroke="#d4d4d4" strokeWidth="1.300" /><path d="M6.500 5.700H14l-1.700 3.800H7.800z" fill="#d4d4d4" /><circle cx="8.300" cy="13" r="1.100" fill="#d4d4d4" /><circle cx="12" cy="13" r="1.100" fill="#d4d4d4" /></svg>
                        </Thumb>
                      </ThumbCell>
                      <Cell $link $spacing={i === 2 ? -0.07 : 0}>{r[1]}</Cell>
                      <Cell $spacing={-0.06}>{r[2]}</Cell>
                      <Cell>{r[3]}</Cell>
                      <Cell $link>{r[4]}</Cell>
                      <Cell>{r[5]}</Cell>
                    </Row>
                  ))}
                </Table>
              </Container>
            </Page>
            <Scrollbar>
              <Arrow />
              <ScrollThumb />
              <Arrow $down />
            </Scrollbar>
          </Viewport>
        </Browser>
      </Body>
    </Desktop>
  );
}
